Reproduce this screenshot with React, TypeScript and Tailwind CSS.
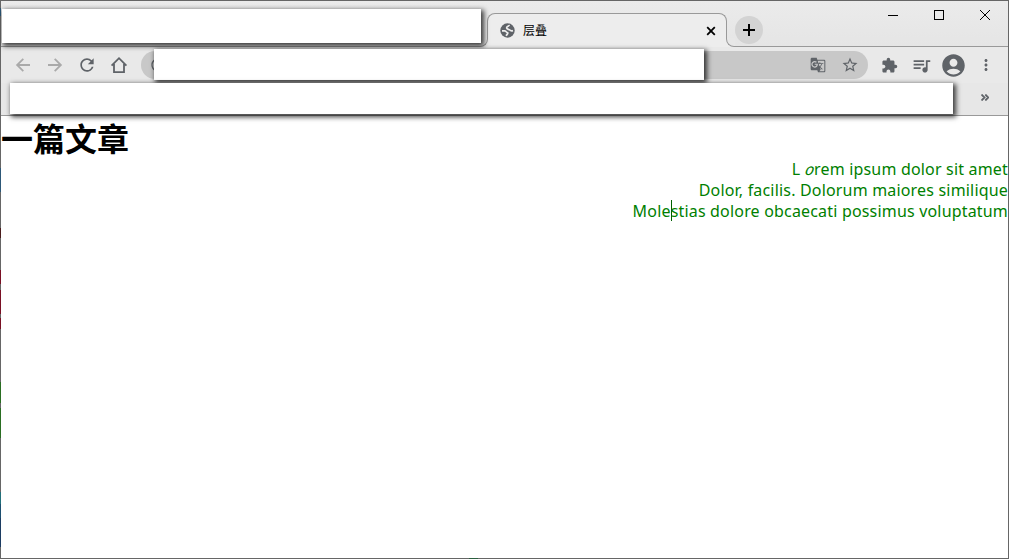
import React from 'react';
import {
  MdAccountCircle,
  MdExtension,
  MdGTranslate,
  MdMoreVert,
  MdOutlineInfo,
  MdQueueMusic,
  MdRefresh,
  MdStarBorder,
} from 'react-icons/md';

// Blank panel that hides the private parts of the browser chrome
const Cover: React.FC<{ className: string }> = ({ className }) => (
  <div className={`absolute z-20 bg-white shadow-[2px_2px_5px_1px_rgba(0,0,0,0.75)] ${className}`} />
);

// Default favicon for pages without their own
const GlobeIcon = () => (
  <svg className="size-[15px]" viewBox="0 0 15 15" fill="none">
    <circle cx="7.500" cy="7.500" r="7.200" fill="#5f6368" />
    <path
      d="M9.200 1.900C9.400 3.400 6.600 3.100 6.600 4.900C6.700 6.600 9 6 9.800 7C10.500 7.900 11.500 8 13 7.600M2 7.800H4.600C6 7.800 5.800 9.200 7.200 9.500C8.600 9.800 7.200 11.300 6 12.800"
      stroke="#ededed"
      strokeWidth="1.700"
      strokeLinejoin="round"
    />
  </svg>
);

const HomeIcon = () => (
  <svg className="size-5" viewBox="0 0 20 20" fill="none" stroke="currentColor" strokeWidth="1.800">
    <path d="M2.600 10.600L10 3.200l7.400 7.400M5 9v8.100h10V9" />
  </svg>
);

const ArrowIcon: React.FC<{ className?: string }> = ({ className = '' }) => (
  <svg className={`size-5 text-[#aaa] ${className}`} viewBox="0 0 20 20" fill="none" stroke="currentColor" strokeWidth="1.800">
    <path d="M17 10H4.500M10.300 3.800L4.100 10l6.200 6.200" />
  </svg>
);

const WindowControls = () => (
  <div className="flex h-7 text-black">
    <svg className="h-7 w-[46px]" viewBox="0 0 46 28" fill="none" stroke="currentColor" shapeRendering="crispEdges">
      <path d="M18 14.500h10" />
    </svg>
    <svg className="h-7 w-[46px]" viewBox="0 0 46 28" fill="none" stroke="currentColor" shapeRendering="crispEdges">
      <path d="M18.500 9.500h9v9h-9z" />
    </svg>
    <svg className="h-7 w-[46px]" viewBox="0 0 46 28" fill="none" stroke="currentColor">
      <path d="M18 9l10 10M28 9l-10 10" />
    </svg>
  </div>
);

const Tab = () => (
  <div className="relative z-10 ml-[486px] flex h-[34px] w-[240px] items-center rounded-t-lg border border-b-0 border-[#999] bg-[#ededed] pl-3 pr-[9px]">
    <GlobeIcon />
    <span className="ml-2 flex-1 text-xs text-black">层叠</span>
    <svg className="size-3 text-black" viewBox="0 0 12 12" stroke="currentColor" strokeWidth="1.800">
      <path d="M2.200 2.200l7.600 7.600M9.800 2.200l-7.600 7.600" />
    </svg>
    {/* Curved feet joining the tab to the toolbar */}
    <div className="absolute -left-[9px] bottom-0 size-[9px] bg-[#ededed]">
      <div className="size-full rounded-br-lg border-b border-r border-[#999] bg-[#e7e7e7]" />
    </div>
    <div className="absolute -right-[9px] bottom-0 size-[9px] bg-[#ededed]">
      <div className="size-full rounded-bl-lg border-b border-l border-[#999] bg-[#e7e7e7]" />
    </div>
  </div>
);

const TitleBar = () => (
  <div className="flex h-[46px] border-b border-[#999] bg-gradient-to-b from-[#ebebeb] to-[#e5e5e5]">
    <div className="flex h-[46px] flex-1 items-end">
      <Tab />
      <div className="mb-[3px] ml-2 flex size-7 items-center justify-center rounded-full bg-[#d3d3d3]">
        <svg className="size-3 text-black" viewBox="0 0 12 12" stroke="currentColor" strokeWidth="2">
          <path d="M0 6h12M6 0v12" />
        </svg>
      </div>
    </div>
    <WindowControls />
  </div>
);

const Toolbar = () => (
  <div className="flex h-9 items-center bg-[#e9e9e9] pl-3 text-[#5f6368]">
    <div className="flex gap-3">
      <ArrowIcon />
      <ArrowIcon className="-scale-x-100" />
      <MdRefresh className="size-5" />
      <HomeIcon />
    </div>
    <div className="ml-3 flex h-7 w-[727px] items-center rounded-full bg-[#c8c8c8]">
      <MdOutlineInfo className="ml-[9px] mr-auto size-4" />
      <MdGTranslate className="mr-[15px] size-4" />
      <MdStarBorder className="mr-[9px] size-[18px]" />
    </div>
    <MdExtension className="ml-[13px] size-[17px]" />
    <MdQueueMusic className="ml-[13px] size-[21px]" />
    <MdAccountCircle className="ml-2 size-[27px]" />
    <MdMoreVert className="ml-2.5 size-[18px]" />
  </div>
);

// What is behind the window shows through its one pixel frame
const FrameTint = () => (
  <>
    <i className="absolute -left-px top-[7px] h-2 w-px bg-[#2d5878]" />
    <i className="absolute -left-px top-[167px] h-6 w-px bg-[#2d5878]" />
    <i className="absolute -left-px top-[227px] h-2.5 w-px bg-[#4a1c1c]" />
    <i className="absolute -left-px top-[269px] h-3.5 w-px bg-[#7a1024]" />
    <i className="absolute -left-px top-[289px] h-6 w-px bg-[#7a1024]" />
    <i className="absolute -left-px top-[317px] h-[11px] w-px bg-[#7a1024]" />
    <i className="absolute -left-px top-[381px] h-[21px] w-px bg-[#2a6e22]" />
    <i className="absolute -left-px top-[407px] h-[30px] w-px bg-[#2a6e22]" />
    <i className="absolute -left-px top-[491px] h-3 w-px bg-[#22707a]" />
    <i className="absolute -left-px top-[503px] h-3.5 w-px bg-[#1c4f70]" />
    <i className="absolute -left-px top-[517px] h-[29px] w-px bg-[#1c3c62]" />
    <i className="absolute -bottom-px left-[468px] h-px w-[9px] bg-[#2c6040]" />
  </>
);

const App: React.FC = () => {
  return (
    <div className="relative h-[559px] w-[1009px] border border-[#666] bg-white font-['Noto_Sans','Noto_Sans_CJK_SC',sans-serif]">
      <TitleBar />
      <Toolbar />
      {/* Bookmarks bar */}
      <div className="flex h-[33px] items-center justify-end border-b border-[#999] bg-[#e7e7e7] pr-[19px]">
        <svg className="mb-1 h-[7px] w-2 text-[#5f6368]" viewBox="0 0 8 7" fill="none" stroke="currentColor" strokeWidth="1.800">
          <path d="M0.500 0.500l3 3l-3 3M4.300 0.500l3 3l-3 3" />
        </svg>
      </div>

      <main>
        <h1 className="h-[43px] pt-px text-[32px] leading-[43px] font-bold text-black">一篇文章</h1>
        <div className="text-right text-base leading-[21px] tracking-[0.18px] text-[#008000]">
          <p>
            L <em className="inline-block w-[9.5px] -skew-x-12">o</em>rem ipsum dolor sit amet
          </p>
          <p>Dolor, facilis. Dolorum maiores similique</p>
          <p>
            Mole
            <span className="relative">
              <i className="absolute left-0 top-0 h-[21px] w-px bg-[#006000]" />
              stias dolore obcaecati possimus voluptatum
            </span>
          </p>
        </div>
      </main>

      <Cover className="left-px top-2 h-[34px] w-[479px]" />
      <Cover className="left-[153px] top-12 h-[31px] w-[550px]" />
      <Cover className="left-[9px] top-[82px] h-[31px] w-[943px]" />
      <FrameTint />
    </div>
  );
};

export default App;
